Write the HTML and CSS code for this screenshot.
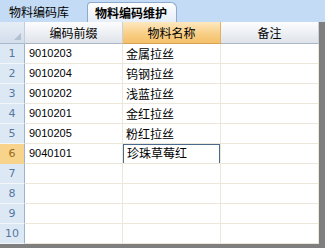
FILE: index.html
```html
<!DOCTYPE html>
<html>
<head>
  <title>物料编码维护</title>
  <link rel="stylesheet" href="styles.css">
</head>
<body>
  <div class="tabs">
    <div class="tab">物料编码库</div>
    <div class="tab active">物料编码维护</div>
  </div>
  <div class="frame">
    <div class="grid">
      <div class="corner"><span class="tri"></span></div>
      <div class="head">编码前缀</div>
      <div class="head sel">物料名称</div>
      <div class="head">备注</div>

      <div class="num">1</div><div class="cell code">9010203</div><div class="cell">金属拉丝</div><div class="cell"></div>
      <div class="num">2</div><div class="cell code">9010204</div><div class="cell">钨钢拉丝</div><div class="cell"></div>
      <div class="num">3</div><div class="cell code">9010202</div><div class="cell">浅蓝拉丝</div><div class="cell"></div>
      <div class="num">4</div><div class="cell code">9010201</div><div class="cell">金红拉丝</div><div class="cell"></div>
      <div class="num">5</div><div class="cell code">9010205</div><div class="cell">粉红拉丝</div><div class="cell"></div>
      <div class="num cur">6</div><div class="cell code">9040101</div><div class="cell"><span class="edit">珍珠草莓红</span></div><div class="cell"></div>
      <div class="num">7</div><div class="cell"></div><div class="cell"></div><div class="cell"></div>
      <div class="num">8</div><div class="cell"></div><div class="cell"></div><div class="cell"></div>
      <div class="num">9</div><div class="cell"></div><div class="cell"></div><div class="cell"></div>
      <div class="num">10</div><div class="cell"></div><div class="cell"></div><div class="cell"></div>
    </div>
  </div>
</body>
</html>
```

FILE: styles.css
```css
body {
  margin: 0;
  width: 325px;
  height: 248px;
  overflow: hidden;
  background: #7f7f7f;
  font-family: "Noto Sans CJK SC", "Liberation Sans", sans-serif;
  font-size: 12px;
  color: #000;
}

/* tab strip */
.tabs {
  display: flex;
  align-items: flex-end;
  height: 22px;
  padding-left: 3px;
  background: #c4dbf5;
  box-sizing: border-box;
}
.tab {
  height: 20px;
  line-height: 19px;
  padding: 0 6px;
  width: 72px;
  box-sizing: border-box;
  margin-right: 12px;
}
.tab.active {
  width: 90px;
  padding-left: 7px;
  font-weight: bold;
  background: linear-gradient(#fdfeff, #e6eef8);
  border: 1px solid #8ea9cb;
  border-bottom: none;
  border-radius: 4px 6px 0 0;
}

/* grid */
.frame {
  height: 222px;
}
.grid {
  display: grid;
  grid-template-columns: 25px 98px 98px 98px;
  grid-template-rows: 22px repeat(10, 20px);
  width: 319px;
  background: #fff;
}
.corner {
  position: relative;
  background: linear-gradient(#e6edf6, #d3deec);
  border-right: 1px solid #c2cedd;
  border-bottom: 1px solid #a9b8ca;
}
.tri {
  position: absolute;
  right: 3px;
  bottom: 3px;
  width: 0;
  height: 0;
  border-left: 7px solid transparent;
  border-bottom: 7px solid #b3c0d0;
}
.head {
  text-align: center;
  line-height: 21px;
  background: linear-gradient(#fdfdfe, #e7ebf0 70%, #dfe4ea);
  border-right: 1px solid #c9d1da;
  border-bottom: 1px solid #aab6c3;
}
.head.sel {
  background: linear-gradient(#fde8c0, #f8cd82 60%, #f5c06a);
  border-right-color: #e0b067;
  border-bottom-color: #d7a253;
}
.num {
  text-align: center;
  line-height: 19px;
  font-family: "DejaVu Sans", sans-serif;
  font-size: 11px;
  color: #56779f;
  background: #dde8f5;
  border-right: 1px solid #9cb3cf;
  border-bottom: 1px solid #f3f7fb;
}
.num.cur {
  background: #f8d38c;
  color: #9a6b1c;
  border-bottom-color: #f8d38c;
}
.cell {
  padding-left: 3px;
  line-height: 19px;
  border-right: 1px solid #ebe8da;
  border-bottom: 1px solid #ebe8da;
  overflow: hidden;
  white-space: nowrap;
}
.code {
  padding-left: 4px;
  font-family: "Liberation Sans", sans-serif;
  font-size: 11px;
}
.edit {
  display: block;
  margin-left: -3px;
  padding-left: 3px;
  height: 18px;
  line-height: 16px;
  border: 1px solid #4b6a8b;
}
```
